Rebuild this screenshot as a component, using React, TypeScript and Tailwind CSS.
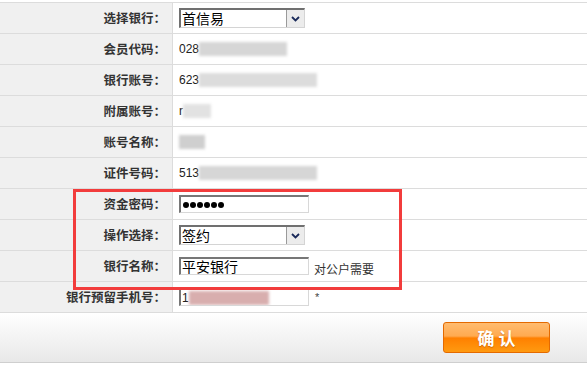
import React from 'react';

const CJK = "font-['Noto_Sans_CJK_SC',sans-serif]";
const LAT = "font-['Liberation_Sans','Noto_Sans_CJK_SC',sans-serif]";

function Row({ label, children }: { label: string; children?: React.ReactNode }) {
    return (
        <div className="flex h-[31px] border-b border-[#dcdcdc]">
            <div className={`w-[173px] shrink-0 bg-[#f0f0f0] border-r border-[#dcdcdc] flex items-center justify-end pr-[6px] text-[12.5px] font-bold text-[#333] ${CJK}`}>
                {label}
            </div>
            <div className="flex-1 flex items-center pl-[6px] bg-white">{children}</div>
        </div>
    );
}

function Blur({ w, tint = 'bg-[#d6d6d6]' }: { w: number; tint?: string }) {
    return <span className={`inline-block h-[14px] ${tint} blur-[1.5px]`} style={{ width: w }} />;
}

function FakeSelect({ value }: { value: string }) {
    return (
        <div className="flex w-[126px] h-[20px] border-t-2 border-l-2 border-[#707070] border-b border-r border-b-[#d4d4d4] border-r-[#d4d4d4] bg-white">
            <div className={`flex-1 text-[14px] leading-[17px] pl-[1px] text-black ${CJK}`}>{value}</div>
            <div className="w-[18px] bg-[#ececec] border-l border-[#9a9a9a] flex items-center justify-center">
                <svg width="9" height="6" viewBox="0 0 9 6">
                    <path d="M1 1 L4.5 4.5 L8 1" stroke="#1a2a5a" strokeWidth="1.8" fill="none" />
                </svg>
            </div>
        </div>
    );
}

function FakeInput({ children, w = 130 }: { children?: React.ReactNode; w?: number }) {
    return (
        <div
            className={`h-[18px] flex items-center border-t-2 border-l-2 border-[#777] border-b border-r border-b-[#d8d8d8] border-r-[#d8d8d8] bg-white pl-[1px] overflow-hidden text-[14px] text-black ${CJK}`}
            style={{ width: w }}
        >
            {children}
        </div>
    );
}

export default function App() {
    return (
        <div className="relative w-[587px] h-[365px] bg-white overflow-hidden">
            <div className="h-[2px]" />
            <div className="border-t border-[#dcdcdc]">
                <Row label="选择银行：">
                    <FakeSelect value="首信易" />
                </Row>
                <Row label="会员代码：">
                    <span className={`text-[12px] text-[#222] ${LAT}`}>028</span>
                    <Blur w={88} />
                </Row>
                <Row label="银行账号：">
                    <span className={`text-[12px] text-[#222] ${LAT}`}>623</span>
                    <Blur w={118} tint="bg-[#dcdcdc]" />
                </Row>
                <Row label="附属账号：">
                    <span className={`text-[12px] text-[#222] ${LAT}`}>r</span>
                    <Blur w={28} tint="bg-[#e2e2e2]" />
                </Row>
                <Row label="账号名称：">
                    <Blur w={26} tint="bg-[#cfcfcf]" />
                </Row>
                <Row label="证件号码：">
                    <span className={`text-[12px] text-[#222] ${LAT}`}>513</span>
                    <Blur w={118} />
                </Row>
                <Row label="资金密码：">
                    <FakeInput>
                        <div className="flex gap-[1px] pl-[1px]">
                            {[0, 1, 2, 3, 4, 5].map((i) => (
                                <span key={i} className="w-[6px] h-[6px] rounded-full bg-black" />
                            ))}
                        </div>
                    </FakeInput>
                </Row>
                <Row label="操作选择：">
                    <FakeSelect value="签约" />
                </Row>
                <Row label="银行名称：">
                    <FakeInput>平安银行</FakeInput>
                    <span className={`ml-[5px] mt-[6px] text-[12px] text-[#333] ${CJK}`}>对公户需要</span>
                </Row>
                <Row label="银行预留手机号：">
                    <FakeInput>
                        <span className={`text-[12px] text-[#222] ${LAT}`}>1</span>
                        <Blur w={80} tint="bg-[#d8aeae]" />
                    </FakeInput>
                    <span className={`ml-[6px] text-[11px] text-[#444] ${LAT}`}>*</span>
                </Row>
            </div>
            <div className="h-[50px] bg-[linear-gradient(to_bottom,#ffffff,#e8e8e8)] border-b border-[#cfcfcf] flex items-center justify-end pr-[37px]">
                <button
                    className={`w-[107px] h-[31px] rounded-[3px] border border-[#e46a00] bg-[linear-gradient(to_bottom,#ffbc70_0%,#ffaa50_45%,#ff8000_52%,#ff9a10_100%)] text-white text-[17px] font-bold tracking-[4px] pl-[4px] [text-shadow:0_1px_1px_rgba(160,70,0,0.5)] ${CJK}`}
                >
                    确认
                </button>
            </div>
            <div className="absolute left-[73px] top-[189px] w-[329px] h-[101px] border-[3px] border-[#f23c3c]" />
        </div>
    );
}
